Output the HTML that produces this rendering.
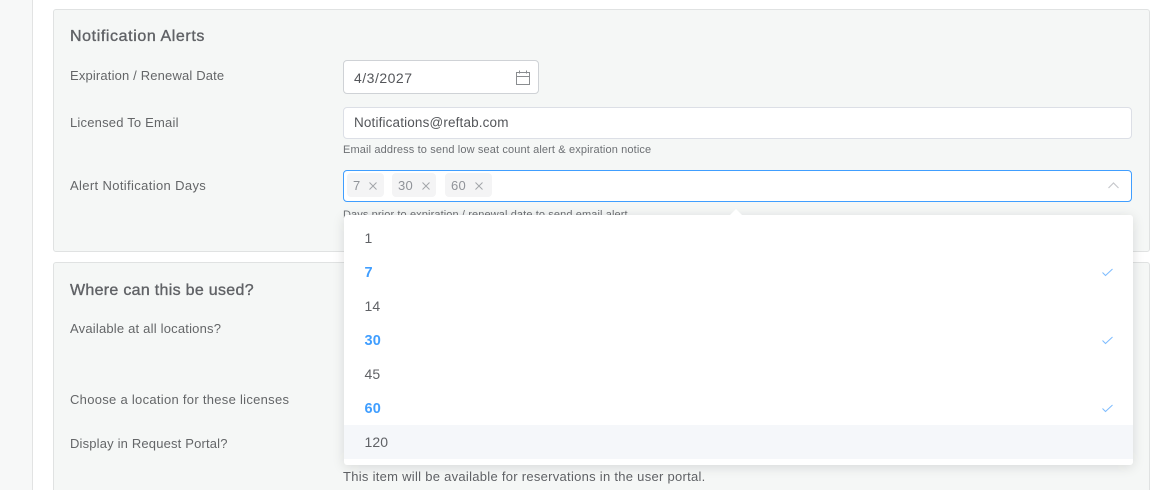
<!DOCTYPE html>
<html>
<head>
<meta charset="utf-8">
<style>
html,body{margin:0;padding:0;width:1169px;height:490px;overflow:hidden;background:#fff}
#w{position:relative;width:1169px;height:490px;overflow:hidden;background:#fff;font-family:"Liberation Sans",sans-serif;color:#606266}
div{box-sizing:border-box}
.a{position:absolute;white-space:nowrap}
.t{position:absolute;white-space:nowrap;line-height:16px}
.lbl{font-size:13px;color:#646668;left:70px}
.h{font-size:16px;color:#606266;left:70px;-webkit-text-stroke:.35px #606266}
.card{position:absolute;left:53px;width:1097px;background:#f5f7f6;border:1px solid #e0e2e2;border-radius:3px}
.box{position:absolute;background:#fff;border:1px solid #dcdfe6;border-radius:4px}
.tag{position:absolute;top:173px;height:24px;background:#f4f4f5;border-radius:4px;color:#909399;font-size:13px;line-height:25px;padding-left:6px;letter-spacing:.3px}
.opt{position:absolute;left:364.5px;font-size:14px;line-height:18px;color:#606266;letter-spacing:.1px}
.sel{color:#409eff;font-weight:bold;font-size:14.5px;letter-spacing:.2px}
.help{font-size:11px;color:#6d7074;left:343px}
svg{position:absolute;overflow:visible}
</style>
</head>
<body>
<div id="w">
<div class="a" style="left:0;top:0;width:33px;height:490px;background:#f7f8f8;border-right:1px solid #e2e3e3"></div>

<div class="card" style="top:9px;height:243px"></div>
<div class="card" style="top:262px;height:240px"></div>

<div class="t h" style="top:28px;letter-spacing:.6px;margin-top:1px">Notification Alerts</div>
<div class="t lbl" style="top:68px;letter-spacing:.16px">Expiration / Renewal Date</div>
<div class="t lbl" style="top:115px;letter-spacing:.2px">Licensed To Email</div>
<div class="t lbl" style="top:178px;letter-spacing:.36px">Alert Notification Days</div>

<div class="box" style="left:343px;top:60px;width:196px;height:34px;border-color:#cfd2d6"></div>
<div class="t" style="left:354px;top:70px;font-size:14px;letter-spacing:.5px;color:#54565a">4/3/2027</div>
<svg style="left:515px;top:70px" width="16" height="15" viewBox="0 0 16 15" fill="none" stroke="#8a8d90" stroke-width="1">
<path d="M1.5 2.5H14.5V14.5H1.5Z"/><path d="M1.5 6.5H14.5"/><path d="M4.5 .5V3.5M11.5 .5V3.5"/>
</svg>

<div class="box" style="left:343px;top:107px;width:789px;height:32px"></div>
<div class="t" style="left:354px;top:115px;font-size:13.5px;letter-spacing:.15px;color:#54565a">Notifications@reftab.com</div>
<div class="t help" style="top:142px;letter-spacing:.13px">Email address to send low seat count alert &amp; expiration notice</div>

<div class="box" style="left:343px;top:170px;width:789px;height:32px;border-color:#409eff"></div>
<div class="tag" style="left:347px;width:37px">7</div>
<div class="tag" style="left:392px;width:44px">30</div>
<div class="tag" style="left:445px;width:47px">60</div>
<svg style="left:369px;top:182px" width="8" height="8" viewBox="0 0 8 8" stroke="#a2a5aa" stroke-width="1" fill="none"><path d="M.5 .5L7.5 7.5M7.5 .5L.5 7.5"/></svg>
<svg style="left:422px;top:182px" width="8" height="8" viewBox="0 0 8 8" stroke="#a2a5aa" stroke-width="1" fill="none"><path d="M.5 .5L7.5 7.5M7.5 .5L.5 7.5"/></svg>
<svg style="left:475px;top:182px" width="8" height="8" viewBox="0 0 8 8" stroke="#a2a5aa" stroke-width="1" fill="none"><path d="M.5 .5L7.5 7.5M7.5 .5L.5 7.5"/></svg>
<svg style="left:1108px;top:182px" width="11" height="7" viewBox="0 0 11 7" stroke="#c6c8cc" stroke-width="1.2" fill="none"><path d="M.5 6L5.5 1L10.5 6"/></svg>
<div class="t help" style="top:207px;letter-spacing:.11px">Days prior to expiration / renewal date to send email alert</div>

<div class="t h" style="top:283px;letter-spacing:.3px">Where can this be used?</div>
<div class="t lbl" style="top:321px;letter-spacing:.2px">Available at all locations?</div>
<div class="t lbl" style="top:392px;letter-spacing:.29px">Choose a location for these licenses</div>
<div class="t lbl" style="top:436px;letter-spacing:.17px">Display in Request Portal?</div>
<div class="t" style="left:343px;top:469px;font-size:13px;letter-spacing:.28px;color:#606266">This item will be available for reservations in the user portal.</div>

<div class="a" style="left:344px;top:215px;width:789px;height:250px;background:#fff;border-radius:3px;box-shadow:0 2px 12px rgba(0,0,0,.12)"></div>
<div class="a" style="left:730px;top:209px;width:0;height:0;border-left:6px solid transparent;border-right:6px solid transparent;border-bottom:6px solid #fff"></div>
<div class="a" style="left:344px;top:425px;width:789px;height:34px;background:#f5f7fa"></div>

<div class="opt" style="top:229px">1</div>
<div class="opt sel" style="top:264px">7</div>
<div class="opt" style="top:297px">14</div>
<div class="opt sel" style="top:332px">30</div>
<div class="opt" style="top:365px">45</div>
<div class="opt sel" style="top:400px">60</div>
<div class="opt" style="top:433px">120</div>

<svg style="left:1102px;top:268px" width="11" height="9" viewBox="0 0 11 9" stroke="#7dbcff" stroke-width="1" fill="none"><path d="M.5 4.5L3.5 7.5L10.5 1"/></svg>
<svg style="left:1102px;top:336px" width="11" height="9" viewBox="0 0 11 9" stroke="#7dbcff" stroke-width="1" fill="none"><path d="M.5 4.5L3.5 7.5L10.5 1"/></svg>
<svg style="left:1102px;top:404px" width="11" height="9" viewBox="0 0 11 9" stroke="#7dbcff" stroke-width="1" fill="none"><path d="M.5 4.5L3.5 7.5L10.5 1"/></svg>
</div>
</body>
</html>
